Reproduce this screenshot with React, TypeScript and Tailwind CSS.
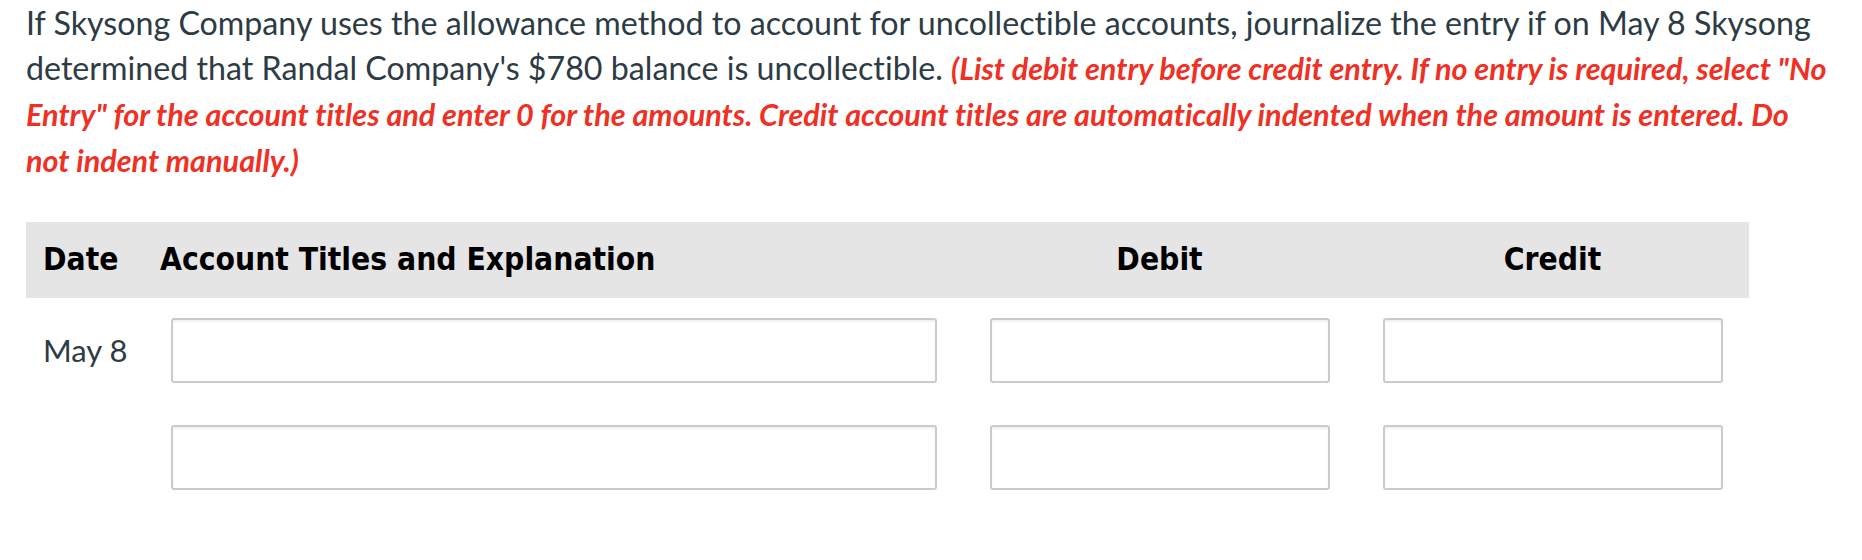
import React from 'react';

const dark = 'text-[#2d3b45]';
const boxCls =
  'h-[65px] border-2 border-[#cbcbcb] rounded-[3px] shadow-[inset_0_2px_2px_rgba(0,0,0,0.06)] bg-white outline-none';

export default function App() {
  const rows = [{ date: 'May 8' }, { date: '' }];

  return (
    <div className="w-[1862px] h-[560px] bg-white overflow-hidden font-['Lato','Noto_Sans',sans-serif] [font-variant-ligatures:none]">
      {/* QUESTION */}
      <p className={`pl-[26px] text-[32.2px] leading-[45px] whitespace-nowrap ${dark}`}>
        If Skysong Company uses the allowance method to account for uncollectible accounts, journalize the entry if on May 8 Skysong
        <br />
        determined that Randal Company's $780 balance is uncollectible.{' '}
        <span className="font-bold italic text-[30.6px] text-[#ee3124]">
          (List debit entry before credit entry. If no entry is required, select "No
          <br />
          Entry" for the account titles and enter 0 for the amounts. Credit account titles are automatically indented when the amount is entered. Do
          <br />
          not indent manually.)
        </span>
      </p>

      {/* JOURNAL TABLE */}
      <div className="mt-[39px] ml-[26px] w-[1723px]">
        <div className="grid grid-cols-[124px_813px_393px_393px] h-[76px] items-center bg-[#e5e5e5] font-['DejaVu_Sans_Condensed','DejaVu_Sans',sans-serif] [font-stretch:condensed] font-bold text-[31.5px] text-black">
          <div className="pl-[17px]">Date</div>
          <div className="pl-[10px]">Account Titles and Explanation</div>
          <div className="text-center">Debit</div>
          <div className="text-center">Credit</div>
        </div>

        {rows.map((row, i) => (
          <div
            key={i}
            className={`grid grid-cols-[124px_813px_393px_393px] items-center ${i === 0 ? 'mt-[20px]' : 'mt-[42px]'}`}
          >
            <div className={`pl-[17px] text-[31px] ${dark}`}>{row.date}</div>
            <div>
              <input type="text" className={`ml-[21px] w-[766px] ${boxCls}`} />
            </div>
            <div className="flex justify-center">
              <input type="text" className={`w-[340px] ${boxCls}`} />
            </div>
            <div className="flex justify-center">
              <input type="text" className={`w-[340px] ${boxCls}`} />
            </div>
          </div>
        ))}
      </div>
    </div>
  );
}
